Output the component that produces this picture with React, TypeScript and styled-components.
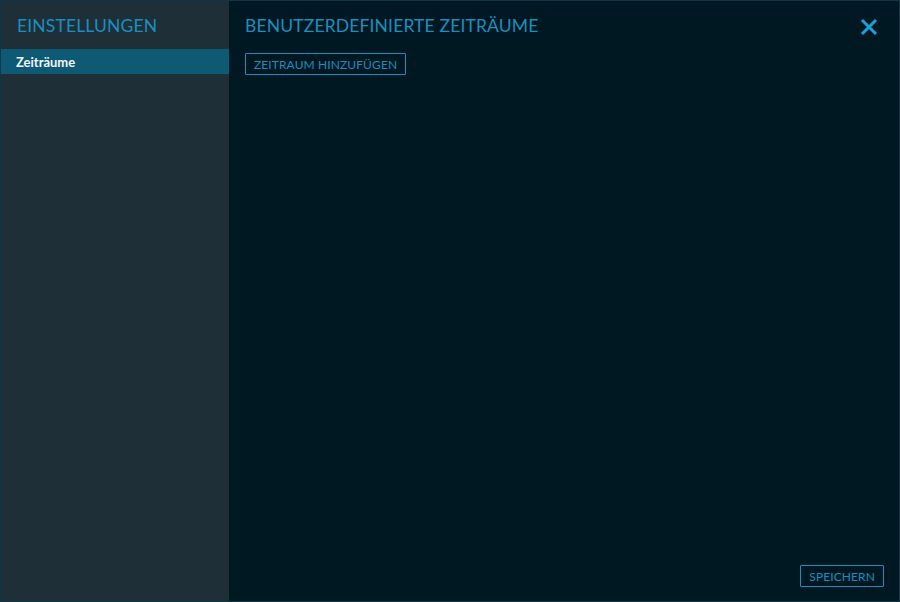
import styled, { createGlobalStyle } from "styled-components";

const GlobalStyle = createGlobalStyle`
  html, body {
    margin: 0;
    padding: 0;
    background: #001822;
  }
  body {
    font-family: Lato, "Noto Sans", sans-serif;
  }
`;

const Frame = styled.div`
  box-sizing: border-box;
  width: 900px;
  height: 602px;
  display: flex;
  border: 1px solid #0b3847;
  background: #001822;
`;

const Sidebar = styled.aside`
  width: 228px;
  flex-shrink: 0;
  background: #1e2f38;
  display: flex;
  flex-direction: column;
`;

const SideTitle = styled.h2`
  margin: 0;
  padding: 14px 0 0 16px;
  height: 34px;
  font-size: 17.5px;
  font-weight: 400;
  color: #1a8fbf;
  letter-spacing: 0.15px;
`;

const NavItem = styled.div<{ $active?: boolean }>`
  height: 25px;
  display: flex;
  align-items: center;
  padding-left: 15px;
  font-size: 13px;
  font-weight: 700;
  color: #f2f6f8;
  background: ${(p) => (p.$active ? "#0e5a75" : "transparent")};
`;

const Main = styled.main`
  flex: 1;
  display: flex;
  flex-direction: column;
  padding: 14px 15px 14px 16px;
`;

const Header = styled.div`
  display: flex;
  align-items: flex-start;
  justify-content: space-between;
`;

const Title = styled.h1`
  margin: 0;
  font-size: 17.5px;
  font-weight: 400;
  color: #1a8fbf;
  letter-spacing: 0.15px;
`;

const CloseButton = styled.button`
  border: none;
  background: none;
  padding: 0;
  margin: 3px 6px 0 0;
  cursor: pointer;
  display: flex;
`;

const OutlineButton = styled.button`
  box-sizing: border-box;
  height: 22px;
  padding: 0 8px;
  border: 1px solid #1a8fbf;
  border-radius: 1px;
  background: transparent;
  color: #1a8fbf;
  font-family: Lato, "Noto Sans", sans-serif;
  font-size: 12px;
  letter-spacing: 0.1px;
  cursor: pointer;
`;

const Toolbar = styled.div`
  margin-top: 17px;
  display: flex;
`;

const Body = styled.div`
  flex: 1;
`;

const Footer = styled.div`
  display: flex;
  justify-content: flex-end;
`;

export default function App() {
  return (
    <>
      <GlobalStyle />
      <Frame>
        <Sidebar>
          <SideTitle>EINSTELLUNGEN</SideTitle>
          <NavItem $active>Zeiträume</NavItem>
        </Sidebar>
        <Main>
          <Header>
            <Title>BENUTZERDEFINIERTE ZEITRÄUME</Title>
            <CloseButton aria-label="Schließen">
              <svg width="18" height="18" viewBox="0 0 18 18">
                <path d="M2 2 L16 16 M16 2 L2 16" stroke="#1aa0d6" strokeWidth="3" />
              </svg>
            </CloseButton>
          </Header>
          <Toolbar>
            <OutlineButton>ZEITRAUM HINZUFÜGEN</OutlineButton>
          </Toolbar>
          <Body />
          <Footer>
            <OutlineButton>SPEICHERN</OutlineButton>
          </Footer>
        </Main>
      </Frame>
    </>
  );
}
